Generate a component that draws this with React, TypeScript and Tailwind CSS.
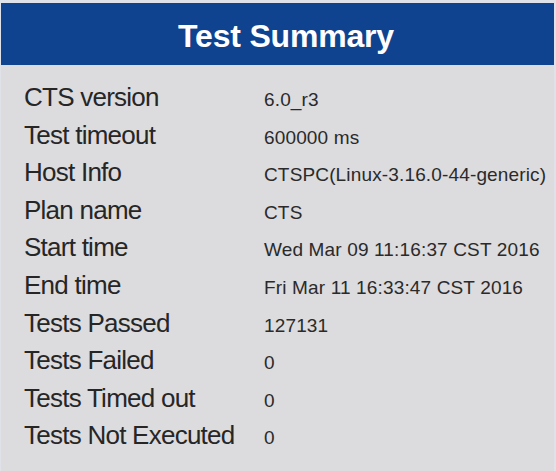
const rows: [string, string][] = [
  ["CTS version", "6.0_r3"],
  ["Test timeout", "600000 ms"],
  ["Host Info", "CTSPC(Linux-3.16.0-44-generic)"],
  ["Plan name", "CTS"],
  ["Start time", "Wed Mar 09 11:16:37 CST 2016"],
  ["End time", "Fri Mar 11 16:33:47 CST 2016"],
  ["Tests Passed", "127131"],
  ["Tests Failed", "0"],
  ["Tests Timed out", "0"],
  ["Tests Not Executed", "0"],
];

export default function App() {
  return (
    <div className="w-[556px] h-[471px] overflow-hidden bg-[#dfe3e9] pt-[3px] pl-[1px] pr-[2px] font-['Liberation_Sans',Arial,sans-serif]">
      <div className="h-full bg-[#dcdbde] flex flex-col">
        <div className="h-[62px] bg-[#0f4390] flex items-center justify-center">
          <h1 className="text-[32px] font-bold text-white tracking-[-0.2px] leading-none pl-[17px] pt-[3px]">
            Test Summary
          </h1>
        </div>

        <div className="pt-[14px] pl-[23px]">
          {rows.map(([label, value]) => (
            <div key={label} className="flex items-baseline h-[37.6px]">
              <span className="w-[240px] text-[26px] leading-[37.6px] tracking-[-0.75px] text-[#262626]">
                {label}
              </span>
              <span className="text-[19px] tracking-[0.15px] text-[#2a2a2a]">{value}</span>
            </div>
          ))}
        </div>
      </div>
    </div>
  );
}
